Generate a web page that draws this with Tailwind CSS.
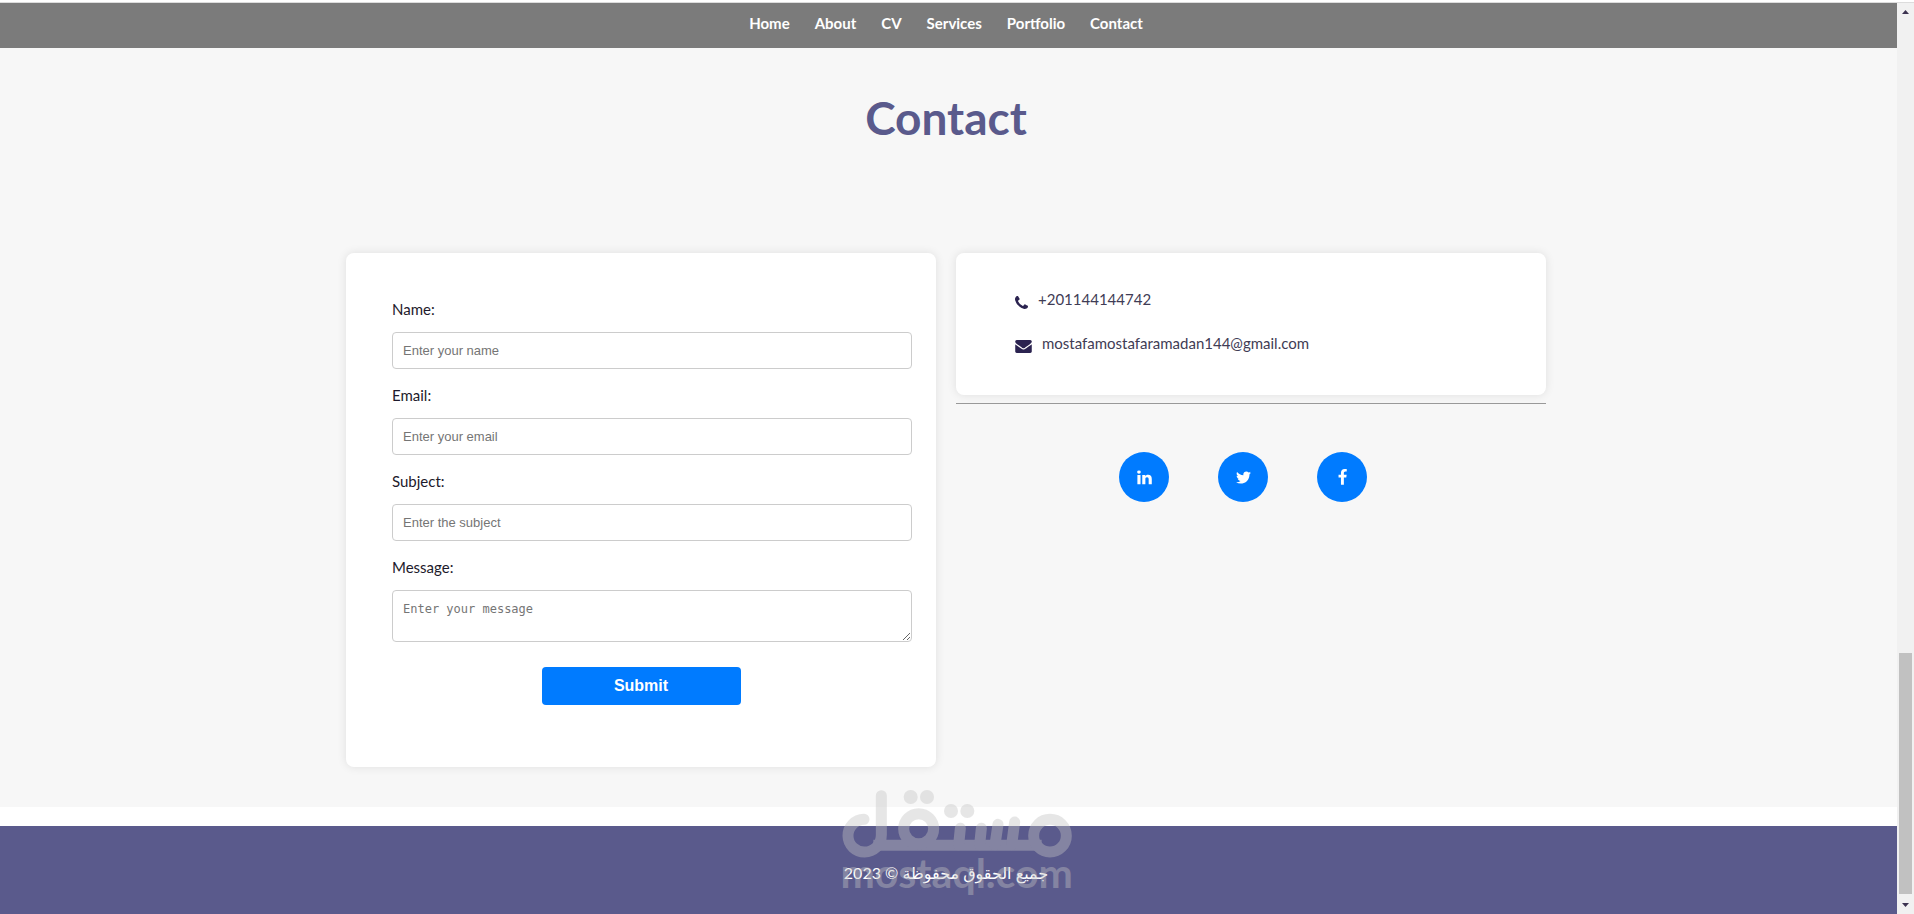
<!DOCTYPE html>
<html lang="en">
<head>
  <meta charset="UTF-8" />
  <meta name="viewport" content="width=device-width, initial-scale=1.0"/>
  <script src="https://cdn.jsdelivr.net/npm/@tailwindcss/browser@4"></script>
  <title>Contact</title>
</head>

<body class="h-screen flex flex-col overflow-hidden bg-white font-[Lato,'Noto_Sans',sans-serif] text-[15px] text-[#1d1a2b]">

  <div class="h-[3px] shrink-0 border-b border-[#dcdcdc]"></div>

  <div class="flex flex-1 min-h-0">
    <div class="relative flex flex-1 flex-col">

      <nav class="flex justify-center gap-[25px] bg-[#7b7b7b] pt-2 pb-[13px] pr-[5px] leading-6 font-bold text-white">
        <a href="#home">Home</a>
        <a href="#about">About</a>
        <a href="#cv">CV</a>
        <a href="#services">Services</a>
        <a href="#portfolio">Portfolio</a>
        <a href="#contact">Contact</a>
      </nav>

      <main id="contact" class="bg-[#f7f7f7] pr-[5px] pt-10 pb-10">
        <h1 class="text-center text-[46px] leading-[60px] font-bold text-[#5a5a8c]">Contact</h1>

        <div class="mx-auto mt-[105px] grid max-w-[1200px] grid-cols-2 items-start gap-5">

          <form class="rounded-lg bg-white pt-11 pb-[62px] shadow-[0_0_10px_rgba(0,0,0,0.1)]">
            <div class="flex flex-col pl-[46px] pr-6">
              <label for="name" class="mb-[11px] leading-6">Name:</label>
              <input id="name" type="text" placeholder="Enter your name" class="mb-[14px] h-[37px] rounded border border-[#ccc] px-[10px] font-['Liberation_Sans',sans-serif] text-[13px] placeholder:text-[#757575]">
              <label for="email" class="mb-[11px] leading-6">Email:</label>
              <input id="email" type="email" placeholder="Enter your email" class="mb-[14px] h-[37px] rounded border border-[#ccc] px-[10px] font-['Liberation_Sans',sans-serif] text-[13px] placeholder:text-[#757575]">
              <label for="subject" class="mb-[11px] leading-6">Subject:</label>
              <input id="subject" type="text" placeholder="Enter the subject" class="mb-[14px] h-[37px] rounded border border-[#ccc] px-[10px] font-['Liberation_Sans',sans-serif] text-[13px] placeholder:text-[#757575]">
              <label for="message" class="mb-[11px] leading-6">Message:</label>
              <textarea id="message" placeholder="Enter your message" class="h-[52px] rounded border border-[#ccc] p-[10px] font-['DejaVu_Sans_Mono',monospace] text-[12px] leading-4 placeholder:text-[#757575]"></textarea>
            </div>
            <button type="submit" class="mx-auto mt-[25px] block h-[38px] w-[199px] rounded bg-[#007bff] font-['Liberation_Sans',sans-serif] text-base font-bold text-white">Submit</button>
          </form>

          <div>
            <div class="flex flex-col gap-5 rounded-lg bg-white pt-[34px] pb-10 pl-[59px] shadow-[0_0_10px_rgba(0,0,0,0.1)]">
              <a href="tel:+201144144742" class="flex items-center gap-[10px] leading-6 text-[#3f3c55]">
                <svg class="mt-[6px] h-[13px] w-[13px] fill-[#2b2350]" viewBox="0 128 1408 1408"><path d="M1408 1240q0 27-10 70.500t-21 68.500q-21 50-122 106-94 51-186 51-27 0-53-3.500t-57.500-12.500-47-14.500-55.500-20.500-49-18q-98-35-175-83-127-79-264-216t-216-264q-48-77-83-175-3-9-18-49t-20.500-55.500-14.500-47-12.500-57.500-3.500-53q0-92 51-186 56-101 106-122 25-11 68.500-21t70.500-10q14 0 21 3 18 6 53 76 11 19 30 54t35 63.500 31 53.500q3 4 17.500 25t21.500 35.500 7 28.500q0 20-28.500 50t-62 55-62 53-28.500 46q0 9 5 22.500t8.500 20.500 14 24 11.500 19q76 137 174 235t235 174q2 1 19 11.500t24 14 20.500 8.500 22.500 5q18 0 46-28.500t53-62 55-62 50-28.500q14 0 28.500 7t35.500 21.500 25 17.500q25 15 53.500 31t63.500 35 54 30q70 35 76 53 3 7 3 21z"/></svg>
                <span>+201144144742</span>
              </a>
              <a href="mailto:mostafamostafaramadan144@gmail.com" class="flex items-center gap-[10px] leading-6 text-[#3f3c55]">
                <svg class="mt-[6px] h-[13px] w-[17px] fill-[#2b2350]" viewBox="0 256 1792 1408"><path d="M1792 710v794q0 66-47 113t-113 47h-1472q-66 0-113-47t-47-113v-794q44 49 101 87 362 246 497 345 57 42 92.500 65.500t94.500 48 110 24.500h2q51 0 110-24.500t94.500-48 92.500-65.500q170-123 498-345 57-39 100-87zm0-294q0 79-49 151t-122 123q-376 261-468 325-10 7-42.500 31t-54 38.500-52 32.500-57.500 27-50 9h-2q-23 0-50-9t-57.500-27-52-32.500-54-38.500-42.500-31q-91-64-262-182.500t-205-142.500q-62-42-117-115.500t-55-136.500q0-78 41.500-130t118.500-52h1472q65 0 112.500 47t47.500 113z"/></svg>
                <span>mostafamostafaramadan144@gmail.com</span>
              </a>
            </div>

            <hr class="mt-2 border-[#999]">

            <div class="mt-12 flex justify-center gap-[49px] pr-4">
              <a href="#linkedin" aria-label="LinkedIn" class="flex size-[50px] items-center justify-center rounded-full bg-[#007bff]">
                <svg class="size-[17px] fill-white" viewBox="0 0 1792 1792"><path d="M477 625v991h-330v-991h330zm21-306q1 73-50.500 122t-135.500 49h-2q-82 0-132-49t-50-122q0-74 51.500-122.500t134.500-48.500 133 48.500 51 122.500zm1166 729v568h-329v-530q0-105-40.500-164.500t-126.500-59.500q-63 0-105.500 34.500t-63.500 85.500q-11 30-11 81v553h-329q2-399 2-647t-1-296l-1-48h329v144h-2q20-32 41-56t56.500-52 87-43.500 114.500-15.500q171 0 275 113.500t104 332.500z"/></svg>
              </a>
              <a href="#twitter" aria-label="Twitter" class="flex size-[50px] items-center justify-center rounded-full bg-[#007bff]">
                <svg class="size-[17px] fill-white" viewBox="0 0 1792 1792"><path d="M1684 408q-67 98-162 167 1 14 1 42 0 130-38 259.500t-115.500 248.500-184.500 210.500-258 146-323 54.500q-271 0-496-145 35 4 78 4 225 0 401-138-105-2-188-64.500t-114-159.500q33 5 61 5 43 0 85-11-112-23-185.500-111.500t-73.500-205.500v-4q68 38 146 41-66-44-105-115t-39-154q0-88 44-163 121 149 294.500 238.500t371.500 99.500q-8-38-8-74 0-134 94.500-228.500t228.500-94.500q140 0 236 102 109-21 205-78-37 115-142 178 93-10 186-50z"/></svg>
              </a>
              <a href="#facebook" aria-label="Facebook" class="flex size-[50px] items-center justify-center rounded-full bg-[#007bff]">
                <svg class="size-[17px] fill-white" viewBox="0 0 1792 1792"><path d="M1343 12v264h-157q-86 0-116 36t-30 108v189h293l-39 296h-254v759h-306v-759h-255v-296h255v-218q0-186 104-288.500t277-102.500q147 0 228 12z"/></svg>
              </a>
            </div>
          </div>

        </div>
      </main>

      <footer class="mt-[19px] flex-1 bg-[#5a5a8c] pr-[5px] pt-[35px] text-center">
        <p dir="rtl" class="font-[Lato,'DejaVu_Sans',sans-serif] text-base leading-6 text-white">جميع الحقوق محفوظة © 2023</p>
      </footer>

      <!-- watermark -->
      <div class="pointer-events-none absolute inset-x-0 bottom-0 flex justify-center pl-[17px]">
        <svg class="h-36 w-[280px] opacity-40" viewBox="-9 0 840 432">
          <g fill="none" stroke="#c3c3c3" stroke-width="33" stroke-linecap="round">
            <path d="M132 148A49 49 0 0 0 134 246C160 246 184 226 184 195V77"/>
            <path d="M160 226H665" stroke-linecap="butt"/>
            <circle cx="296" cy="176" r="45"/>
            <circle cx="690" cy="197" r="49"/>
            <path d="M416 224L421 175M479 224L484 175M525 224L534 163M575 224L584 156"/>
          </g>
          <g fill="#c3c3c3">
            <circle cx="272" cy="81" r="21"/>
            <circle cx="321" cy="81" r="21"/>
            <circle cx="393" cy="123" r="21"/>
            <circle cx="442" cy="123" r="21"/>
            <text x="410" y="355" text-anchor="middle" font-family="Lato" font-weight="700" font-size="123">mostaql.com</text>
          </g>
        </svg>
      </div>
    </div>

    <!-- scrollbar -->
    <div class="flex w-[17px] shrink-0 flex-col items-center justify-between bg-[#f1f1f1] py-[7px]">
      <svg class="h-1 w-[7px] fill-[#3c3350]" viewBox="0 0 7 4"><path d="M0 4L3.500 0L7 4z"/></svg>
      <div class="flex flex-1 flex-col justify-end pb-[9px]">
        <div class="h-[241px] w-[13px] bg-[#c1c1c1]"></div>
      </div>
      <svg class="h-1 w-[7px] fill-[#3c3350]" viewBox="0 0 7 4"><path d="M0 0H7L3.500 4z"/></svg>
    </div>
  </div>

</body>
</html>
